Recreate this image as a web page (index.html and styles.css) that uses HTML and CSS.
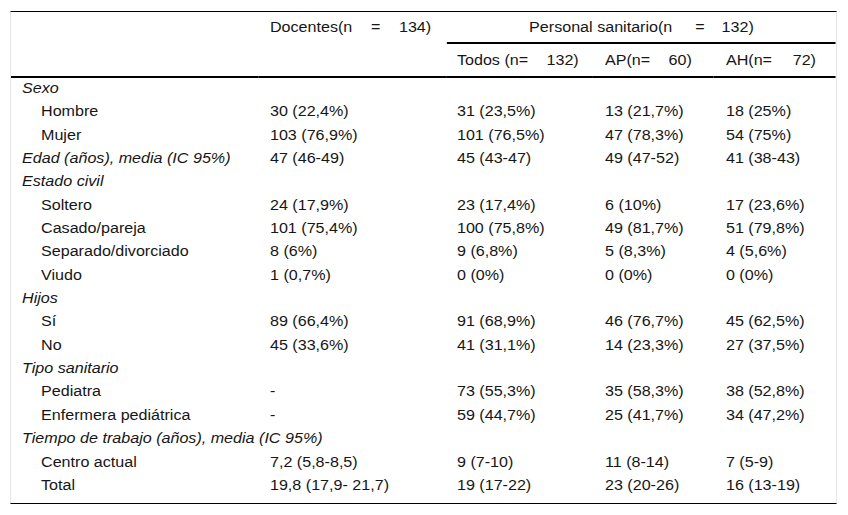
FILE: index.html
```html
<!DOCTYPE html>
<html lang="es">
<head>
<meta charset="utf-8">
<title>Tabla</title>
<link rel="stylesheet" href="styles.css">
</head>
<body>
<div class="frame">
  <table class="data">
    <colgroup>
      <col class="c1"><col class="c2"><col class="c3"><col class="c4"><col class="c5">
    </colgroup>
    <thead>
      <tr class="h1">
        <th rowspan="2" class="lab"></th>
        <th rowspan="2" class="doc">Docentes(n<span class="g1">=</span><span class="g1">134)</span></th>
        <th colspan="3" class="ps">Personal sanitario(n<span class="g2">=</span><span class="g3">132)</span></th>
      </tr>
      <tr class="h2">
        <th class="todos">Todos (n=<span class="g4">132)</span></th>
        <th class="ap">AP(n=<span class="g5">60)</span></th>
        <th class="ah">AH(n=<span class="g6">72)</span></th>
      </tr>
    </thead>
    <tbody>
      <tr><td class="cat">Sexo</td><td></td><td></td><td></td><td></td></tr>
      <tr><td class="sub">Hombre</td><td>30 (22,4%)</td><td>31 (23,5%)</td><td>13 (21,7%)</td><td>18 (25%)</td></tr>
      <tr><td class="sub">Mujer</td><td>103 (76,9%)</td><td>101 (76,5%)</td><td>47 (78,3%)</td><td>54 (75%)</td></tr>
      <tr><td class="cat">Edad (años), media (IC 95%)</td><td>47 (46-49)</td><td>45 (43-47)</td><td>49 (47-52)</td><td>41 (38-43)</td></tr>
      <tr><td class="cat">Estado civil</td><td></td><td></td><td></td><td></td></tr>
      <tr><td class="sub">Soltero</td><td>24 (17,9%)</td><td>23 (17,4%)</td><td>6 (10%)</td><td>17 (23,6%)</td></tr>
      <tr><td class="sub">Casado/pareja</td><td>101 (75,4%)</td><td>100 (75,8%)</td><td>49 (81,7%)</td><td>51 (79,8%)</td></tr>
      <tr><td class="sub">Separado/divorciado</td><td>8 (6%)</td><td>9 (6,8%)</td><td>5 (8,3%)</td><td>4 (5,6%)</td></tr>
      <tr><td class="sub">Viudo</td><td>1 (0,7%)</td><td>0 (0%)</td><td>0 (0%)</td><td>0 (0%)</td></tr>
      <tr><td class="cat">Hijos</td><td></td><td></td><td></td><td></td></tr>
      <tr><td class="sub">Sí</td><td>89 (66,4%)</td><td>91 (68,9%)</td><td>46 (76,7%)</td><td>45 (62,5%)</td></tr>
      <tr><td class="sub">No</td><td>45 (33,6%)</td><td>41 (31,1%)</td><td>14 (23,3%)</td><td>27 (37,5%)</td></tr>
      <tr><td class="cat">Tipo sanitario</td><td></td><td></td><td></td><td></td></tr>
      <tr><td class="sub">Pediatra</td><td>-</td><td>73 (55,3%)</td><td>35 (58,3%)</td><td>38 (52,8%)</td></tr>
      <tr><td class="sub">Enfermera pediátrica</td><td>-</td><td>59 (44,7%)</td><td>25 (41,7%)</td><td>34 (47,2%)</td></tr>
      <tr><td class="cat">Tiempo de trabajo (años), media (IC 95%)</td><td></td><td></td><td></td><td></td></tr>
      <tr><td class="sub">Centro actual</td><td>7,2 (5,8-8,5)</td><td>9 (7-10)</td><td>11 (8-14)</td><td>7 (5-9)</td></tr>
      <tr class="last"><td class="sub">Total</td><td>19,8 (17,9- 21,7)</td><td>19 (17-22)</td><td>23 (20-26)</td><td>16 (13-19)</td></tr>
    </tbody>
  </table>
</div>
</body>
</html>
```

FILE: styles.css
```css
html, body {
  margin: 0;
  padding: 0;
  background: #ffffff;
}

body {
  font-family: "Liberation Sans", Arial, sans-serif;
  color: #161616;
}

.frame {
  margin: 11px 0 0 10px;
  width: 825px;
  border: 1px solid;
  border-color: #000 #e6e6e6 #000 #e6e6e6;
  overflow: hidden;
}

.data {
  table-layout: fixed;
  border-collapse: separate;
  border-spacing: 0;
  width: 717.4px;
  font-size: 14px;
  line-height: 18px;
  transform: scaleX(1.15);
  transform-origin: 0 0;
}

.c1 { width: 214.8px; }
.c2 { width: 164.3px; }
.c3 { width: 127px; }
.c4 { width: 105.2px; }
.c5 { width: 106.1px; }

th {
  font-weight: normal;
  text-align: left;
  vertical-align: top;
  white-space: nowrap;
  padding: 0;
}

.h1 th {
  padding-top: 6px;
  padding-bottom: 6px;
}

.h1 .lab,
.h1 .doc {
  border-bottom: 2px solid #000;
}

.h1 .doc {
  padding-left: 10.4px;
}

.h1 .ps {
  text-align: center;
  border-bottom: 2px solid #000;
}

.h2 th {
  padding-top: 7px;
  padding-bottom: 7px;
  border-bottom: 2px solid #000;
}

.h2 .todos { padding-left: 8.7px; }
.h2 .ap { padding-left: 10.4px; }
.h2 .ah { padding-left: 10.4px; }

.g1 { margin-left: 16.2px; }
.g2 { margin-left: 20px; }
.g3 { margin-left: 14.7px; }
.g4 { margin-left: 16px; }
.g5 { margin-left: 16px; }
.g6 { margin-left: 18px; }

td {
  padding: 1px 0 4.35px 10.4px;
  white-space: nowrap;
  vertical-align: top;
}

td:nth-child(3) { padding-left: 8.7px; }

td.cat {
  font-style: italic;
  padding-left: 9.6px;
}

td.sub {
  padding-left: 26.1px;
}

tr.last td {
  padding-bottom: 9px;
}
```
